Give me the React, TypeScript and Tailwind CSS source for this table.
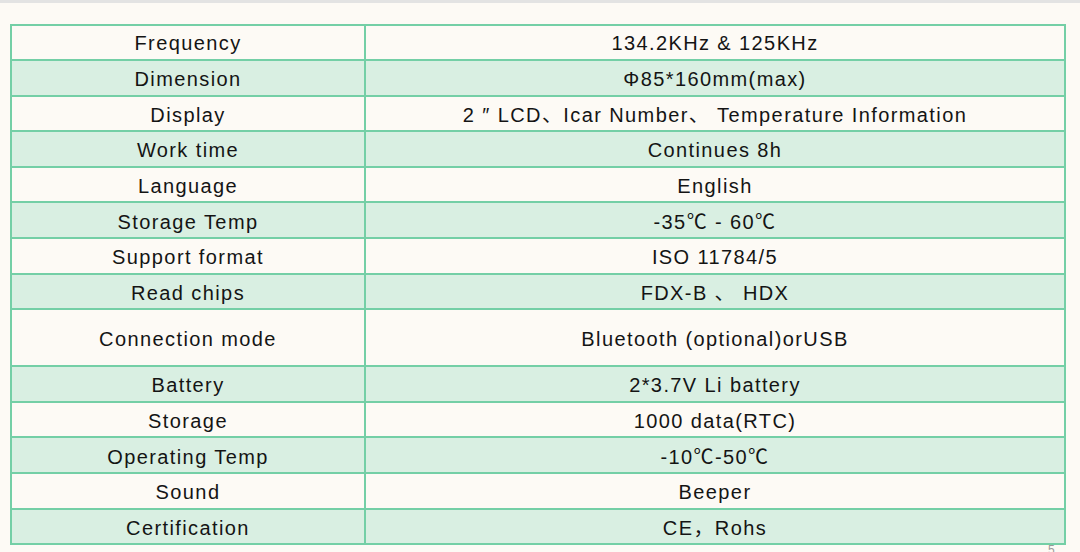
const rows: { label: string; value: string; tall?: boolean }[] = [
  { label: 'Frequency', value: '134.2KHz & 125KHz' },
  { label: 'Dimension', value: 'Φ85*160mm(max)' },
  { label: 'Display', value: '2 ″ LCD、Icar Number、 Temperature Information' },
  { label: 'Work time', value: 'Continues 8h' },
  { label: 'Language', value: 'English' },
  { label: 'Storage Temp', value: '-35℃ - 60℃' },
  { label: 'Support format', value: 'ISO 11784/5' },
  { label: 'Read chips', value: 'FDX-B 、 HDX' },
  { label: 'Connection mode', value: 'Bluetooth (optional)orUSB', tall: true },
  { label: 'Battery', value: '2*3.7V Li battery' },
  { label: 'Storage', value: '1000 data(RTC)' },
  { label: 'Operating Temp', value: '-10℃-50℃' },
  { label: 'Sound', value: 'Beeper' },
  { label: 'Certification', value: 'CE，Rohs' },
];

export default function App() {
  return (
    <div
      className="relative h-[552px] w-[1080px] overflow-hidden border-t-[3px] border-[#e3e3e3] bg-[#fdfaf5] pl-[10px] pt-[21px] text-[#141414]"
      style={{ fontFamily: '"Liberation Sans", Arial, "Noto Sans CJK SC", sans-serif' }}
    >
      <div className="w-[1056px] border-2 border-[#74cfa6]">
        {rows.map((row, i) => (
          <div
            key={row.label}
            className={`flex ${row.tall ? 'h-[57px]' : i === 0 ? 'h-[33px]' : 'h-[35.6px]'} ${i > 0 ? 'border-t-2 border-[#74cfa6]' : ''} ${i % 2 === 1 ? 'bg-[#d9efe2]' : ''}`}
          >
            <div
              className={`flex w-[354px] shrink-0 items-center justify-center border-r-2 border-[#74cfa6] text-[20px] tracking-[1.4px] ${i > 0 ? 'pt-[3px]' : ''}`}
            >
              {row.label}
            </div>
            <div className={`flex flex-1 items-center justify-center text-[20px] tracking-[1.4px] ${i > 0 ? 'pt-[3px]' : ''}`}>
              {row.value}
            </div>
          </div>
        ))}
      </div>
      <span className="absolute left-[1048px] top-[538px] text-[12px] text-[#9a9a9a]">5</span>
    </div>
  );
}
